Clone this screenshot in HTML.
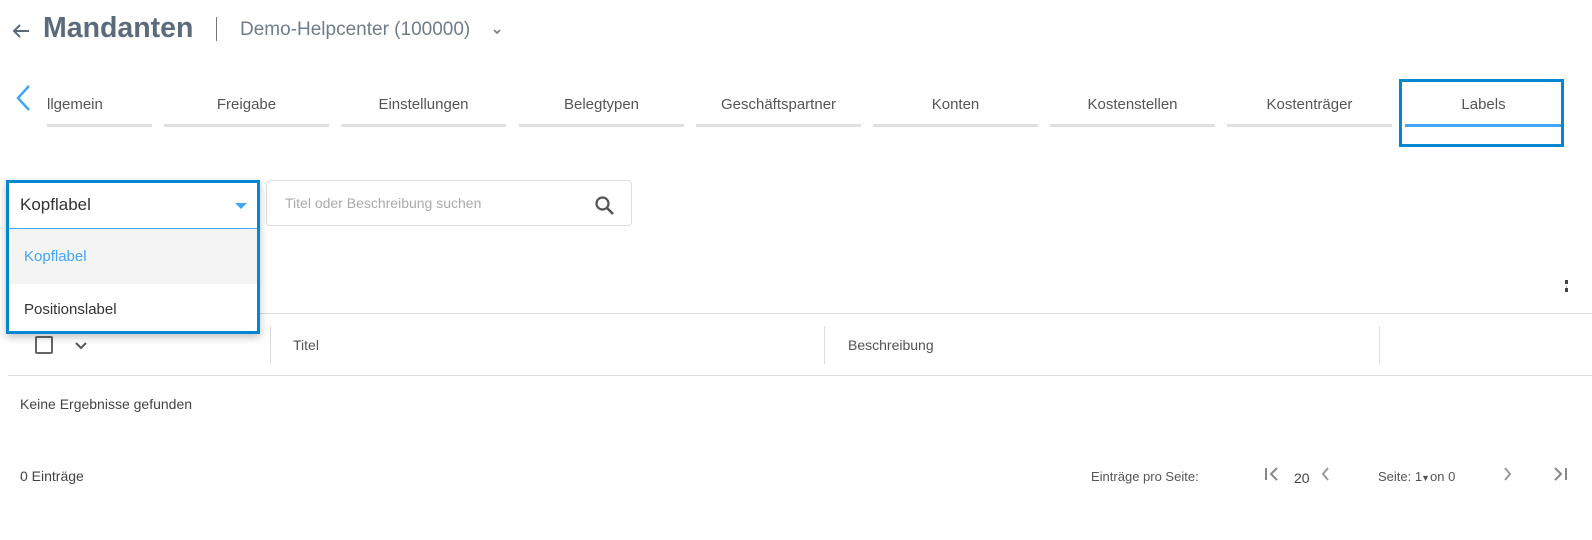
<!DOCTYPE html>
<html><head><meta charset="utf-8"><style>
*{box-sizing:border-box;margin:0;padding:0}
body{width:1592px;height:540px;overflow:hidden;background:#fff;font-family:"Liberation Sans",sans-serif;color:#444;position:relative}
.a{position:absolute}
.tab{position:absolute;top:79px;height:48px;font-size:15px;color:#555;text-align:center;line-height:52px}
.tab i{position:absolute;left:0;right:0;bottom:0;height:3px;background:#e0e0e0}
.hd{font-size:14px;color:#555}
</style></head><body>
<svg class="a" style="left:11px;top:22px" width="20" height="18" viewBox="0 0 20 18"><path d="M18 9H3M9 3L3 9l6 6" stroke="#5a6b7b" stroke-width="2" fill="none"/></svg>
<div class="a" style="left:43px;top:12px;font-size:28.5px;font-weight:bold;color:#5b6b7c">Mandanten</div>
<div class="a" style="left:216px;top:17px;width:1px;height:24px;background:#777"></div>
<div class="a" style="left:240px;top:19px;font-size:19px;color:#6e7d8c">Demo-Helpcenter (100000)</div>
<svg class="a" style="left:492px;top:28px" width="10" height="8" viewBox="0 0 10 8"><path d="M2 2l3 3 3-3" stroke="#6e7d8c" stroke-width="1.6" fill="none"/></svg>

<svg class="a" style="left:14px;top:84px" width="18" height="28" viewBox="0 0 18 28"><path d="M15 2L4 14l11 12" stroke="#42a5f5" stroke-width="2.5" fill="none"/></svg>
<div class="tab" style="left:47px;width:105px;text-align:left">llgemein<i></i></div>
<div class="tab" style="left:164px;width:165px">Freigabe<i></i></div>
<div class="tab" style="left:341px;width:165px">Einstellungen<i></i></div>
<div class="tab" style="left:519px;width:165px">Belegtypen<i></i></div>
<div class="tab" style="left:696px;width:165px">Geschäftspartner<i></i></div>
<div class="tab" style="left:873px;width:165px">Konten<i></i></div>
<div class="tab" style="left:1050px;width:165px">Kostenstellen<i></i></div>
<div class="tab" style="left:1227px;width:165px">Kostenträger<i></i></div>
<div class="tab" style="left:1405px;width:157px">Labels<i style="background:#42a5f5"></i></div>
<div class="a" style="left:1399px;top:79px;width:165px;height:68px;border:3px solid #0288d1"></div>

<div class="a" style="left:266px;top:180px;width:366px;height:46px;border:1px solid #ddd;border-radius:4px"></div>
<div class="a" style="left:285px;top:195px;font-size:14px;color:#aaa">Titel oder Beschreibung suchen</div>
<svg class="a" style="left:594px;top:195px" width="22" height="22" viewBox="0 0 22 22"><circle cx="8.5" cy="8.5" r="6" stroke="#555" stroke-width="2.2" fill="none"/><path d="M13 13l6 6" stroke="#555" stroke-width="2.6"/></svg>

<div class="a" style="left:1565px;top:280px;width:5px;height:12px;border-left:3px dotted #444"></div>
<div class="a" style="left:8px;top:313px;width:1584px;height:1px;background:#ddd"></div>
<div class="a" style="left:8px;top:375px;width:1584px;height:1px;background:#ddd"></div>
<div class="a" style="left:35px;top:336px;width:18px;height:18px;border:2px solid #666;border-radius:2px"></div>
<svg class="a" style="left:74px;top:341px" width="14" height="10"><path d="M2 2l5 5 5-5" stroke="#555" stroke-width="2" fill="none"/></svg>
<div class="a" style="left:270px;top:326px;width:1px;height:38px;background:#ddd"></div>
<div class="a" style="left:824px;top:326px;width:1px;height:38px;background:#ddd"></div>
<div class="a" style="left:1379px;top:326px;width:1px;height:38px;background:#ddd"></div>
<div class="a hd" style="left:293px;top:337px">Titel</div>
<div class="a hd" style="left:848px;top:337px">Beschreibung</div>
<div class="a hd" style="left:20px;top:396px;color:#444">Keine Ergebnisse gefunden</div>

<div class="a" style="left:6px;top:180px;width:254px;height:154px;border:3px solid #0288d1;background:#fff;box-shadow:0 3px 8px rgba(0,0,0,.25);z-index:5">
 <div style="height:46px;border-bottom:1px solid #42a5f5;padding:12px 0 0 11px;font-size:17px;color:#333">Kopflabel</div>
 <svg style="position:absolute;left:226px;top:20px" width="12" height="7"><path d="M0 0h12L6 6z" fill="#42a5f5"/></svg>
 <div style="height:55px;background:#f4f4f4;padding:19px 0 0 15px;font-size:15px;color:#42a5f5">Kopflabel</div>
 <div style="padding:17px 0 0 15px;font-size:15px;color:#333">Positionslabel</div>
</div>

<div class="a" style="left:20px;top:468px;font-size:14px;color:#444">0 Einträge</div>
<div class="a" style="left:1091px;top:469px;font-size:13px;color:#555">Einträge pro Seite:</div>
<svg class="a" style="left:1264px;top:467px" width="16" height="14"><path d="M2 1v12M13 1L7 7l6 6" stroke="#888" stroke-width="2" fill="none"/></svg>
<div class="a" style="left:1294px;top:470px;font-size:14px;color:#444">20</div>
<svg class="a" style="left:1320px;top:467px" width="10" height="14"><path d="M8 1L3 7l5 6" stroke="#999" stroke-width="2" fill="none"/></svg>
<div class="a" style="left:1378px;top:469px;font-size:13px;color:#555">Seite: 1<span style="font-size:9px;margin-left:-1px">▼</span>on 0</div>
<svg class="a" style="left:1503px;top:467px" width="10" height="14"><path d="M2 1l5 6-5 6" stroke="#999" stroke-width="2" fill="none"/></svg>
<svg class="a" style="left:1553px;top:467px" width="16" height="14"><path d="M2 1l6 6-6 6M13 1v12" stroke="#888" stroke-width="2" fill="none"/></svg>
</body></html>
